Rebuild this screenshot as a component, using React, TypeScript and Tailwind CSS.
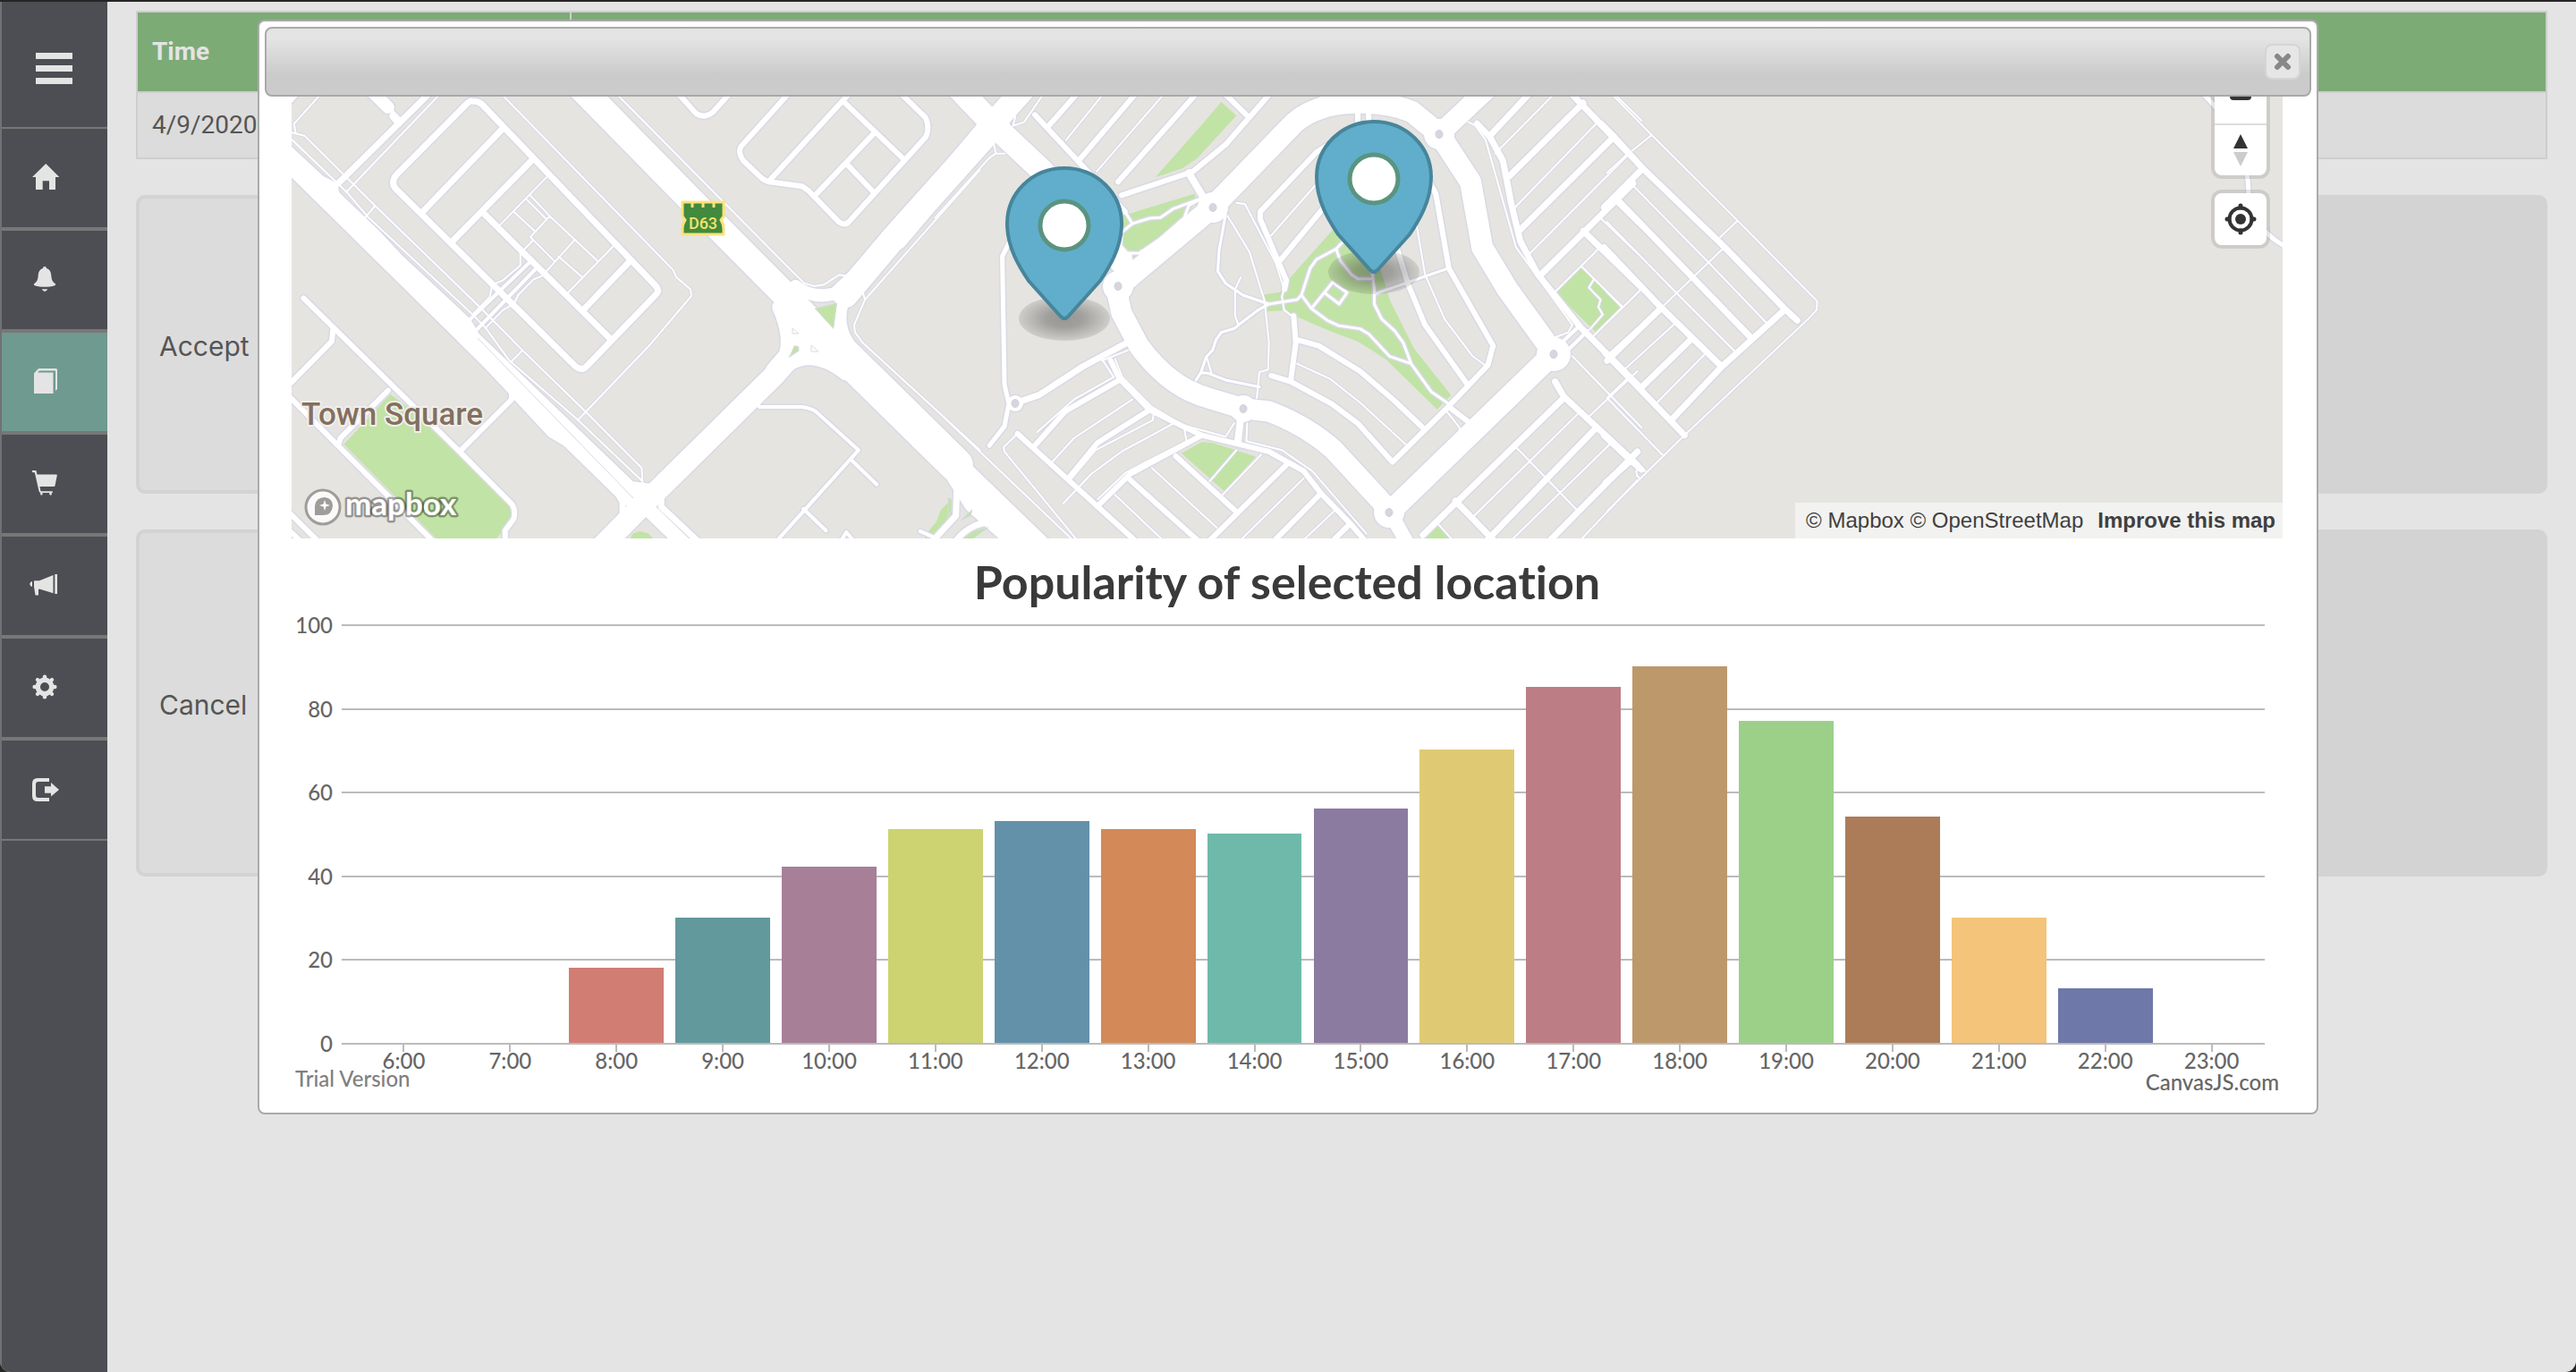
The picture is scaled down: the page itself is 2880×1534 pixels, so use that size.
import { useState } from "react";
import type { ReactNode } from "react";

type NavItem = { name: string; icon: ReactNode };

type Road = { w: number; d: string };

type Tile = { transform: string; green: string; roads: Road[]; islands?: string };

type Hour = { label: string; value: number; color: string };

const navItems: NavItem[] = [
  {
    name: "Home",
    icon: <path d="M17.3 0L32.3 15H28V29H21V19.300H13.700V29H6V15H2Z" />,
  },
  {
    name: "Notifications",
    icon: (
      <path d="M16 1c1.300 0 2 .8 2 2 3.200.8 5 3.800 5.300 8 .3 5 1.700 7.300 4.200 9 1 .7.8 1.800-.3 2.200C24 23.300 20 23.700 16 23.700s-8-.4-11.200-1.500C3.700 21.800 3.500 20.700 4.500 20c2.500-1.700 3.900-4 4.200-9C9 6.800 10.800 3.800 14 3c0-1.200.7-2 2-2ZM13 26c2 .3 4 .3 6 0-.5 1.800-1.500 2.700-3 2.700s-2.500-.9-3-2.700Z" />
    ),
  },
  {
    name: "Bookings",
    icon: (
      <path d="M4 6.500L8.500 1.500Q9 1 10 1H28.500Q30 1 30 2.500V24L28 26V3.500H10L8 5.500H25.500V29H4Z" />
    ),
  },
  {
    name: "Shop",
    icon: (
      <path d="M2 1H5.500Q6.500 1 6.700 2L7.500 5.500H29Q30 5.500 29.800 6.500L27.500 18Q27.300 19 26.300 19H10.500L11.500 24.300H24.500Q25.500 25 24.500 26H23.800V28Q22.500 29 21.300 28V26H13.500V28Q12.300 29 11.200 28V26Q9.800 25.500 9.500 24L4.800 3.200H2.500Q1.500 2 2 1Z" />
    ),
  },
  {
    name: "Announcements",
    icon: (
      <path d="M2 11V17Q-.7 16.500-.7 14T2 11ZM4 10.300H10L25.500 4V24.200L10 19.500L9 20V26.500H5.500L4 17ZM27.300 3H30V25H27.300Z" />
    ),
  },
  {
    name: "Settings",
    icon: (
      <g fill="none" stroke="currentColor">
        <circle cx="16" cy="15" r="7.700" strokeWidth="5.400" />
        <path
          strokeWidth="4.600"
          strokeLinecap="round"
          d="M16 5V3.700M16 25V26.300M6 15H4.700M26 15H27.300"
        />
        <path
          strokeWidth="4.200"
          strokeLinecap="round"
          d="M9 8L8 7M23 8L24 7M9 22L8 23M23 22L24 23"
        />
      </g>
    ),
  },
  {
    name: "Log out",
    icon: (
      <path d="M21 3V7H9Q6 7 6 10V22Q6 25 9 25H21V29H8Q2 29 2 23V9Q2 3 8 3ZM16 12.300H23V8L32 16L23 23.500V19.700H16Z" />
    ),
  },
];

const hours: Hour[] = [
  { label: "6:00", value: 0, color: "#ffffff" },
  { label: "7:00", value: 0, color: "#ffffff" },
  { label: "8:00", value: 18, color: "#d27d74" },
  { label: "9:00", value: 30, color: "#61999d" },
  { label: "10:00", value: 42, color: "#a77f97" },
  { label: "11:00", value: 51, color: "#ccd370" },
  { label: "12:00", value: 53, color: "#6391aa" },
  { label: "13:00", value: 51, color: "#d38958" },
  { label: "14:00", value: 50, color: "#6fb9aa" },
  { label: "15:00", value: 56, color: "#8c7ba0" },
  { label: "16:00", value: 70, color: "#dfca73" },
  { label: "17:00", value: 85, color: "#bc7e84" },
  { label: "18:00", value: 90, color: "#bd986b" },
  { label: "19:00", value: 77, color: "#9cd088" },
  { label: "20:00", value: 54, color: "#ac7c58" },
  { label: "21:00", value: 30, color: "#f3c47a" },
  { label: "22:00", value: 13, color: "#6e78a9" },
  { label: "23:00", value: 0, color: "#ffffff" },
];

const yTicks = [100, 80, 60, 40, 20, 0];

// Each tile keeps its own coordinates, the transform places it on the map.
// Road widths are in screen pixels (strokes do not scale with the tile).
const tiles: Tile[] = [
  {
    transform: "translate(-6 -18) scale(0.4847 0.3333)",
    green:
      "M240 1052L330 1150L400 1260L520 1430Q526 1450 520 1475L480 1545H352L133 1220ZM790 1545L800 1520L815 1512L835 1520L852 1545ZM1535 1405L1510 1440L1500 1480L1480 1515L1470 1545H1492L1535 1460Z",
    islands:
      "M1220 765L1270 747L1262 832ZM1165 915L1172 890L1182 893V907L1160 928Z",
    roads: [
      { w: 29, d: "M680 25L960 440L1240 850" },
      { w: 38, d: "M1230 840L1545 1290" },
      { w: 28, d: "M1640 140L1400 530L1290 720" },
      { w: 14, d: "M1400 530L1285 740Q1265 820 1300 890" },
      { w: 14, d: "M1175 690Q1215 735 1265 715L1320 640" },
      { w: 24, d: "M1180 900L1125 990L825 1420L730 1560" },
      { w: 14, d: "M1135 760Q1165 860 1150 920L1120 970" },
      { w: 14, d: "M1130 990Q1200 880 1290 985" },
      { w: 22, d: "M1180 790L1190 870L1215 920L1290 950" },
      { w: 16, d: "M790 1375L925 1565" },
      { w: 7, d: "M776 1400V1450M865 1380V1430L960 1560" },
      {
        w: 7,
        d: "M430 70Q445 68 455 85L853 690Q862 705 853 718L692 960Q682 975 668 960L252 362Q240 340 255 315L415 80Q425 65 430 70ZM497 165L315 440M565 270L383 540M455 445L750 870M790 610L685 770",
      },
      { w: 7, d: "M325 50L120 345M260 145L245 120M0 80L25 40" },
      { w: 14, d: "M200 40L235 90" },
      { w: 4, d: "M565 605L425 800M582 622L440 835M235 90L265 135" },
      {
        w: 6,
        d: "M40 730L400 1245L520 1420Q530 1440 525 1470L505 1510V1555M108 835L105 875L0 1030M235 1040L125 1200L122 1215M0 1050L345 1555M400 1245L520 1070V1040M0 1440L80 1555M0 1500L40 1555",
      },
      {
        w: 6,
        d: "M905 45L945 110Q965 130 985 105L1022 45M1158 45L1050 220Q1040 240 1055 270L1095 325Q1105 340 1125 342L1190 355L1205 370L1275 475Q1290 490 1300 470L1475 190Q1485 160 1475 125L1415 40M1298 45L1115 335M1285 70L1423 262M1357 175L1220 385M1293 280L1357 378",
      },
      {
        w: 4,
        d: "M1085 1085L1092 1095H1190Q1215 1100 1225 1115L1320 1240L1125 1555M1303 1272L1362 1355M1193 1437L1245 1510M1275 1555L1292 1515L1315 1555M1462 1512L1490 1530",
      },
      {
        w: 2,
        d: "M80 45L18 145L22 178M0 170L42 185L205 420L450 765L545 905L690 1110L820 1300L822 1355M0 180L140 375L190 460L430 785L460 830L515 940L670 1135L822 1345M355 45L138 375M205 420L182 460M545 905L520 942M496 45L892 635L900 660L932 700L935 722L840 885L672 1140",
      },
      {
        w: 2,
        d: "M762 45L1160 630L1195 680L1218 690L1240 685L1275 652L1290 655M1600 300L1335 735L1310 820L1312 845L1330 880L1600 1240M1330 710L1335 735",
      },
      {
        w: 2,
        d: "M600 325L493 485M555 400L600 465M563 385L608 455L563 525L618 605M608 455L718 605M525 440L573 505M665 535L600 640M628 590L683 660M755 555L650 712M570 535L540 580V620L500 670L475 685L470 725L430 785M590 655L570 668L535 720L525 750L500 770L460 830",
      },
    ],
  },
  {
    transform: "translate(734 -18) scale(0.4847 0.3333)",
    green:
      "M630 72L665 118L575 260L540 295L478 325L590 140ZM400 455L568 380L572 400L545 470L490 545L410 628L398 560ZM900 480L790 660L765 710L730 718L735 775L770 772L800 790L880 840L945 875L1010 935L1128 1103L1160 1055L1075 900L1020 740L990 600L960 560ZM538 1250L585 1213L610 1215L710 1262L637 1378ZM1460 625L1555 760L1495 845L1400 710ZM1130 1487L1165 1545H1095Z",
    islands: "M0 1400L8 1405V1440L0 1465ZM30 1475L55 1440L52 1460ZM30 1545Q55 1505 92 1500L50 1545Z",
    roads: [
      { w: 26, d: "M0 -10L105 150L215 300L400 610" },
      { w: 26, d: "M180 20L100 150L-120 530" },
      {
        w: 24,
        d: "M393 690L610 425L800 140Q850 80 930 75T1070 105L1133 180L1205 340L1232 560L1290 700L1397 915L1017 1450",
      },
      {
        w: 23,
        d: "M385 680L400 780L440 890Q510 1030 600 1065L680 1100L740 1110Q830 1160 890 1240L1017 1440",
      },
      { w: 22, d: "M1133 180L1250 20" },
      { w: 26, d: "M-20 1240L215 1570" },
      { w: 22, d: "M20 1330L60 1420L170 1560" },
      { w: 7, d: "M20 1370L18 1460L-45 1560M110 1480Q50 1480 15 1550" },
      { w: 16, d: "M1020 1450L1062 1560" },
      {
        w: 6,
        d: "M200 115L408 440M230 155L300 40M305 262L435 40M392 340L575 40M400 385L545 315L565 305L640 215L745 40M635 40L688 115",
      },
      { w: 8, d: "M555 310L590 395M675 1130L668 1215" },
      {
        w: 6,
        d: "M950 150L850 240L720 440V465L780 670L776 700M768 600L870 420M970 60V140M945 110V140",
      },
      {
        w: 6,
        d: "M797 790L802 880L790 1010M745 990L790 1010L885 1085L945 1150L1025 1280L1150 1100L1245 955L1257 890L1155 630L1125 380L1060 200M805 870L855 890L950 975L1030 1075L1095 1165M1035 560L1060 680L1100 820L1198 1020M1155 1095L1200 1145",
      },
      { w: 5, d: "M140 545L125 590L130 1020L140 1085L130 1160L95 1225" },
      { w: 7, d: "M155 1082L210 1055L310 960L412 880" },
      {
        w: 6,
        d: "M375 940L395 1000L465 1105L520 1145L585 1190L740 1245L820 1310L860 1385L930 1490L965 1550M160 1185L440 1555M395 1005L270 1110L200 1225M465 1105L345 1215L280 1330M585 1190L420 1320L350 1420M420 1340L585 1555M525 1260L660 1440M780 1290L595 1555M860 1385L745 1555M925 1490L880 1555",
      },
      {
        w: 7,
        d: "M1220 145L1250 190L1280 270L1300 420L1320 540L1360 650L1460 830L1590 1020M1250 185L1340 45M1295 320L1465 75M1320 500L1535 190M1365 655L1580 345M1435 40L1580 260M1465 505L1600 695M1540 400L1600 485",
      },
      {
        w: 7,
        d: "M1400 1010L1420 1060L1590 1290M1420 1065L1095 1525M1495 1165L1235 1555M1590 1245L1380 1555M1530 920L1590 840M1170 1410L1260 1545",
      },
      { w: 4, d: "M1400 900L1455 825M1415 925L1475 840M1185 1130L1205 1150" },
      {
        w: 3,
        d: "M640 450L625 570L622 640L640 680L680 720L740 750L805 735L815 720L835 630L850 600L895 565L915 535M740 750L715 770L670 820L660 832L630 845L618 870L610 905L595 928L583 980L572 1005M583 980L600 982L640 1005L718 1028",
      },
      {
        w: 3,
        d: "M895 565L905 605L930 650L945 665H978M978 640L983 700V750L1000 800L1030 840L1050 880L1068 950L1115 1045L1160 1090M815 720L838 765L875 805L900 822L950 833L970 850L1018 925L1068 950M838 765L887 677L920 712L902 750L868 712M985 715L1150 632",
      },
      {
        w: 3,
        d: "M408 440L425 480L400 510L398 560L410 578L440 580L490 530L545 460L555 420L585 395M425 480L465 462L490 460L520 430L585 395M422 580L415 630",
      },
      {
        w: 2,
        d: "M645 455L695 575L730 740L740 880L738 970L718 978L712 1065M675 660L662 700V790L670 820M597 930L607 980M665 410L685 415L755 610L775 700L770 725L775 770L797 795M745 520L860 330M805 950L880 1000L950 1080L1055 1220M1080 480L1100 650L1145 800L1210 925L1238 955",
      },
      {
        w: 2,
        d: "M358 45L272 200M498 45L343 305M220 45L175 140L150 152L155 120V45M105 210L110 245H130M110 245L95 260L-30 460M140 152L160 190",
      },
      {
        w: 2,
        d: "M355 935L382 995L290 1070L205 1180M425 1070L290 1200L240 1280M520 1150L400 1245L330 1320L265 1420M475 1110L472 1140L340 1240L285 1335M545 1170L550 1210L410 1315L345 1405M385 1390L505 1555M470 1300L620 1500M820 1335L665 1555M890 1445L810 1555M415 905L355 940M160 1185L128 1230L130 1245L305 1555M-10 1130L290 1545M385 935L402 995L470 1095L540 1155L640 1195L660 1150M690 1150L688 1210L770 1240L840 1310L965 1520",
      },
      {
        w: 2,
        d: "M665 1240L603 1345M722 1255L633 1390M1200 140L1215 150L1240 200L1310 560L1340 620L1440 820L1430 845L1400 862M1398 45L1262 245M1498 140L1305 430M1575 240L1335 590M1500 455L1590 580M1500 565L1398 712M1490 665L1478 695L1505 735L1500 760L1510 785L1480 835M1460 622L1556 760L1490 855M1440 925L1600 1165M1455 1115L1210 1465M1530 1215L1290 1555M1310 1230L1450 1440M1480 1125L1590 975M1590 1340L1450 1555M1150 1110L1180 1165V1180L1030 1390M1130 1487L1172 1555M1540 50L1600 135",
      },
    ],
  },
  {
    transform: "translate(1474 -18) scale(0.3333)",
    green: "M-6 715L40 762L-6 808Z",
    roads: [
      {
        w: 7,
        d: "M-30 145L10 185L110 295L375 550L585 765L628 805M110 295L-20 425M20 395L475 865M-20 560L170 760L375 960M585 770L375 960L205 1140M170 765L-10 940M270 870L105 1030M-15 915L250 1190M-20 1190L70 1275L105 1305M70 1275L-15 1350",
      },
      {
        w: 2,
        d: "M5 45L140 183L428 470L695 740L693 770L665 800L250 1190L-10 1445M140 183L75 235M60 245L-10 310M428 470L370 525M378 565L180 755M75 350L330 610L522 810M-10 475L222 712L420 910M-10 710L42 762L-10 812M100 705L42 762M213 820L50 968M318 918L158 1080M55 1003L-10 1065L178 1258M88 1310L100 1298L118 1310M88 1310L90 1325L100 1335",
      },
    ],
  },
  {
    transform: "translate(0 0)",
    green: "",
    roads: [{ w: 5, d: "M2134 -6Q2188 44 2188 110Q2192 148 2230 168" }],
  },
];

const roundabouts = [
  { x: 924, y: 212, r: 17 },
  { x: 1030, y: 124, r: 17 },
  { x: 1283, y: 42, r: 17 },
  { x: 1411, y: 288, r: 19 },
  { x: 1064, y: 349, r: 15 },
  { x: 1227, y: 465, r: 17 },
  { x: 809, y: 343, r: 9 },
];

export default function App() {
  const [active, setActive] = useState("Bookings");

  return (
    <div className="min-h-screen bg-[#262424] pt-0.5 font-[Roboto,sans-serif]">
      <div className="flex min-h-[calc(100vh-2px)] overflow-hidden rounded-b-xl bg-[#e4e4e4]">
        <Sidebar active={active} onSelect={setActive} />

        <main className="min-w-0 flex-1 py-[10px] pr-8 pl-8">
          <table className="w-full border-collapse border-2 border-[#cecece] text-left text-[28px]">
            <thead>
              <tr className="h-[90px] bg-[#7cab76] text-[#e4e4e4]">
                <th className="w-[18%] border-2 border-[#cecece] px-4 font-bold">Time</th>
                <th className="border-2 border-[#cecece] px-4" />
              </tr>
            </thead>
            <tbody>
              <tr className="h-[74px] bg-[#dcdcdc] text-[#555555]">
                <td className="border-2 border-r-0 border-[#cecece] px-4">4/9/2020</td>
                <td className="border-2 border-l-0 border-[#cecece] px-4" />
              </tr>
            </tbody>
          </table>

          <Panel label="Accept" className="mt-10 h-[334px]" />
          <Panel label="Cancel" className="mt-10 h-[388px]" />
        </main>
      </div>

      <div className="fixed inset-0 flex items-start justify-center pt-[22px]">
        <LocationDialog />
      </div>
    </div>
  );
}

function Sidebar({
  active,
  onSelect,
}: {
  active: string;
  onSelect: (name: string) => void;
}) {
  return (
    <nav className="w-[120px] shrink-0 border-l-2 border-[#707173] bg-[#4d4e53]">
      <button
        aria-label="Toggle menu"
        className="flex h-[140px] w-full flex-col justify-center gap-[7px] pt-2 pl-[38px]"
      >
        <span className="h-[7px] w-[41px] bg-[#e4e4e4]" />
        <span className="h-[7px] w-[41px] bg-[#e4e4e4]" />
        <span className="h-[7px] w-[41px] bg-[#e4e4e4]" />
      </button>

      {navItems.map((item) => (
        <button
          key={item.name}
          aria-label={item.name}
          onClick={() => onSelect(item.name)}
          className={`flex h-[114px] w-full items-center border-y-2 border-[#777777] pl-8 text-[#e4e4e4] ${
            active === item.name ? "bg-[#6f9a90]" : ""
          }`}
        >
          <svg viewBox="0 0 32 32" className="size-8 overflow-visible" fill="currentColor">
            {item.icon}
          </svg>
        </button>
      ))}
    </nav>
  );
}

function Panel({ label, className }: { label: string; className: string }) {
  return (
    <section
      className={`flex overflow-hidden rounded-[10px] border-4 border-[#d3d3d3] bg-[#d3d3d3] ${className}`}
    >
      <div className="flex w-1/5 items-center bg-[#dcdcdc] pt-1 pl-[22px] font-[Inter,sans-serif] text-[30px] text-[#555555]">
        {label}
      </div>
    </section>
  );
}

function LocationDialog() {
  return (
    <div
      role="dialog"
      aria-label="Location"
      className="w-4/5 rounded-lg border-2 border-[#aaaaaa] bg-white p-1.5"
    >
      <div className="flex h-[78px] items-center justify-end rounded-lg border-2 border-[#a9a9a9] bg-linear-to-b from-[#e4e4e4] from-15% to-[#cbcbcb] to-70% pr-[10px]">
        <button
          aria-label="Close"
          className="flex size-10 items-center justify-center rounded-lg border-2 border-[#d5d5d5] bg-[#e6e6e6]"
        >
          <svg viewBox="0 0 20 20" className="size-5" stroke="#888888" strokeWidth="6" strokeLinecap="round">
            <path d="M4 4L16 16M16 4L4 16" />
          </svg>
        </button>
      </div>

      <div className="pr-8 pl-[30px]">
        <MapView />
        <PopularityChart />
      </div>
    </div>
  );
}

function MapView() {
  return (
    <div className="relative h-[494px] overflow-hidden bg-[#e5e4e0]">
      <svg
        viewBox="0 0 2226 494"
        preserveAspectRatio="xMinYMin slice"
        className="size-full"
        fill="none"
        strokeLinejoin="round"
      >
        <defs>
          <radialGradient id="pin-shadow">
            <stop offset="0" stopColor="#000" stopOpacity="0.34" />
            <stop offset="0.4" stopColor="#000" stopOpacity="0.3" />
            <stop offset="1" stopColor="#000" stopOpacity="0.1" />
          </radialGradient>
        </defs>

        {tiles.map((t) => (
          <g key={t.transform} transform={t.transform}>
            <path d={t.green} fill="#c1e3a5" />
          </g>
        ))}

        <Roads casing />
        <Highway casing />
        {roundabouts.map((r) => (
          <circle key={r.x} cx={r.x} cy={r.y} r={r.r} fill="#fff" stroke="#d9d9e6" strokeWidth="3" />
        ))}
        <Roads />
        <Highway />
        {roundabouts.map((r) => (
          <g key={r.x}>
            <circle cx={r.x} cy={r.y} r={r.r} fill="#fff" />
            <ellipse cx={r.x} cy={r.y} rx="4" ry="4.500" fill="#d6d6dc" stroke="#d0d0e2" />
          </g>
        ))}

        {tiles.map((t) => (
          <g key={t.transform} transform={t.transform}>
            <path
              d={t.islands}
              fill="#c1e3a5"
              stroke="#d9d9e6"
              vectorEffect="non-scaling-stroke"
            />
          </g>
        ))}
        <path
          d="M208 270L382 449M560 259L567 265H560ZM581 278L589 285H581Z"
          stroke="#d9d9e6"
        />

        <RouteShield />

        <text
          x="11"
          y="367"
          fill="#846f5f"
          stroke="#f0efec"
          strokeWidth="4"
          paintOrder="stroke"
          className="font-[Roboto,sans-serif] text-[35px] font-medium"
        >
          Town Square
        </text>

        <MapboxLogo />
        <Pin x={864} y={249} />
        <Pin x={1210} y={197} />
      </svg>

      <div className="absolute top-0 right-[14px] flex flex-col gap-3">
        <div className="flex flex-col divide-y-2 divide-[#dddddd] rounded-b-xl border-4 border-t-0 border-black/10 bg-white bg-clip-padding">
          <button aria-label="Zoom out" className="flex h-8 w-[58px] items-start justify-center">
            <span className="h-1 w-6 rounded-b-sm bg-[#333333]" />
          </button>
          <button aria-label="Reset north" className="flex h-14 w-[58px] items-center justify-center">
            <svg viewBox="0 0 16 36" className="h-9 w-4">
              <path d="M8 0L16 16H0Z" fill="#333333" />
              <path d="M8 36L16 20H0Z" fill="#cccccc" />
            </svg>
          </button>
        </div>
        <div className="rounded-xl border-4 border-black/10 bg-white bg-clip-padding">
          <button aria-label="Find my location" className="flex h-[58px] w-[58px] items-center justify-center">
            <svg viewBox="0 0 36 36" className="size-9">
              <circle cx="18" cy="18" r="12.500" fill="none" stroke="#333333" strokeWidth="4" />
              <circle cx="18" cy="18" r="6" fill="#333333" />
              <path
                d="M18 3V5M18 31V33M3 18H5M31 18H33"
                stroke="#333333"
                strokeWidth="5"
                strokeLinecap="round"
              />
            </svg>
          </button>
        </div>
      </div>

      <div className="absolute right-0 bottom-0 flex h-10 items-center gap-4 bg-white/50 pr-2 pl-3 font-['Liberation_Sans',sans-serif] text-2xl text-[#404040]">
        <span>
          <a href="#mapbox">© Mapbox</a> <a href="#osm">© OpenStreetMap</a>
        </span>
        <a href="#improve" className="font-bold">
          Improve this map
        </a>
      </div>
    </div>
  );
}

function Roads({ casing }: { casing?: boolean }) {
  return (
    <>
      {tiles.map((t) => (
        <g key={t.transform} transform={t.transform}>
          {t.roads.map((road) => (
            <path
              key={road.d}
              d={road.d}
              stroke={casing ? "#d9d9e6" : "#ffffff"}
              strokeWidth={casing ? road.w + (road.w > 2 ? 3 : 2) : road.w}
              strokeLinecap="round"
              vectorEffect="non-scaling-stroke"
            />
          ))}
        </g>
      ))}
    </>
  );
}

// the western highway changes width along its way, so it is an area
function Highway({ casing }: { casing?: boolean }) {
  return (
    <g transform="translate(-6 -18) scale(0.4847 0.3333)">
      <path
        d="M-30 165L85 320L118 345L122 375L215 505L270 590L425 800L445 850L800 1345L850 1355L830 1440L770 1420L760 1395L640 1225L605 1195L535 1085L510 1045L455 960L-30 265Z"
        fill={casing ? "none" : "#ffffff"}
        stroke={casing ? "#d9d9e6" : "none"}
        strokeWidth="3"
        vectorEffect="non-scaling-stroke"
      />
    </g>
  );
}

function RouteShield() {
  return (
    <g>
      <path
        d="M437 118H483V134L480 138Q483 142 483 148V154H437V148Q437 142 440 138L437 134Z"
        fill="#418a3e"
        stroke="#fbe27a"
        strokeWidth="3"
      />
      <path d="M448 117V124M460 117V124M472 117V124" stroke="#fbe27a" strokeWidth="3" />
      <text
        x="460"
        y="148"
        textAnchor="middle"
        fill="#f7e26b"
        className="font-[Roboto,sans-serif] text-[18px] font-medium"
      >
        D63
      </text>
    </g>
  );
}

function MapboxLogo() {
  return (
    <g>
      <circle cx="35" cy="459" r="19" fill="#fafafa" stroke="#9e9d9a" strokeWidth="3" />
      <path d="M26 468V458Q27 448 37 448Q46 449 46 458Q45 468 35 468Z" fill="#9e9d9a" />
      <path d="M37 451L38.500 455.500L43 457L38.500 458.500L37 463L35.500 458.500L31 457L35.500 455.500Z" fill="#fff" />
      <text
        x="60"
        y="468"
        fill="#ffffff"
        stroke="#000000"
        strokeOpacity="0.35"
        strokeWidth="5"
        strokeLinejoin="round"
        paintOrder="stroke"
        className="font-[Lato,sans-serif] text-[35px] font-bold"
      >
        mapbox
      </text>
    </g>
  );
}

function Pin({ x, y }: { x: number; y: number }) {
  return (
    <g transform={`translate(${x} ${y})`}>
      <ellipse cy="-1" rx="51" ry="25" fill="url(#pin-shadow)" />
      <path
        d="M0 -169C36 -169 64 -141 64 -107C64 -80 50 -58 40 -43L4 -3Q0 1 -4 -3L-40 -43C-50 -58 -64 -80 -64 -107C-64 -141 -36 -169 0 -169Z"
        fill="#60aecb"
        stroke="#47859b"
        strokeWidth="4"
      />
      <circle cy="-105" r="27" fill="#ffffff" stroke="#5a9480" strokeWidth="5" />
    </g>
  );
}

function PopularityChart() {
  return (
    <section className="font-['Trebuchet_MS',Lato,sans-serif] font-medium text-[#666666]">
      <h2 className="text-center text-[52px] leading-[96px] font-bold text-[#3a3a3a] [font-variant-ligatures:none]">
        Popularity of selected location
      </h2>

      <div className="flex pr-5">
        <div className="flex h-[470px] w-14 flex-col justify-between pr-[10px] text-2xl">
          {yTicks.map((tick) => (
            <span key={tick} className="flex h-0.5 items-center justify-end">
              {tick}
            </span>
          ))}
        </div>

        <div className="min-w-0 flex-1">
          <div className="relative h-[470px]">
            <div className="absolute inset-0 flex flex-col justify-between">
              {yTicks.map((tick) => (
                <span key={tick} className="h-0.5 bg-[#bbbbbb]" />
              ))}
            </div>
            <div className="relative flex h-full pb-0.5 pl-[10px]">
              {hours.map((hour) => (
                <div key={hour.label} className="flex h-full flex-1 items-end justify-center">
                  <div
                    className="w-[89%]"
                    style={{ height: `${hour.value}%`, backgroundColor: hour.color }}
                  />
                </div>
              ))}
            </div>
          </div>

          <div className="flex pl-[10px] text-2xl leading-5">
            {hours.map((hour) => (
              <div key={hour.label} className="flex flex-1 flex-col items-center">
                <span className="h-2 w-0.5 bg-[#bbbbbb]" />
                {hour.label}
              </div>
            ))}
          </div>
        </div>
      </div>

      <div className="flex h-[42px] items-start justify-between pr-1 pl-1 text-2xl">
        <span className="leading-5 text-[#808080]">Trial Version</span>
        <a href="#canvasjs" className="leading-7">
          CanvasJS.com
        </a>
      </div>
    </section>
  );
}
